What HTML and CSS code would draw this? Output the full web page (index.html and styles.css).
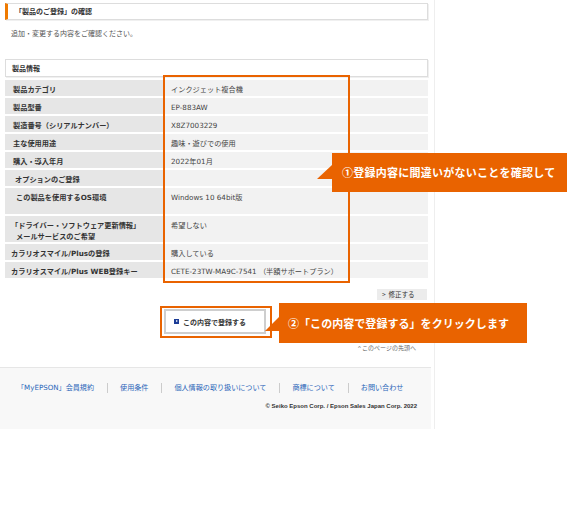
FILE: index.html
```html
<!DOCTYPE html>
<html lang="ja">
<head>
<meta charset="utf-8">
<title>製品のご登録の確認</title>
<link rel="stylesheet" href="styles.css">
</head>
<body>
<div class="page">
  <h1 class="title">「製品のご登録」の確認</h1>
  <p class="lead">追加・変更する内容をご確認ください。</p>
  <h2 class="section">製品情報</h2>
  <div class="tablewrap">
    <table class="info">
      <colgroup><col class="col-label"><col></colgroup>
      <tr><th>製品カテゴリ</th><td>インクジェット複合機</td></tr>
      <tr><th>製品型番</th><td>EP-883AW</td></tr>
      <tr><th>製造番号（シリアルナンバー）</th><td>X8Z7003229</td></tr>
      <tr><th>主な使用用途</th><td>趣味・遊びでの使用</td></tr>
      <tr><th>購入・導入年月</th><td>2022年01月</td></tr>
      <tr><th class="ind1">オプションのご登録</th><td></td></tr>
      <tr class="tall"><th class="ind2">この製品を使用するOS環境</th><td>Windows 10 64bit版</td></tr>
      <tr class="tall"><th class="ind3">「ドライバー・ソフトウェア更新情報」<br>メールサービスのご希望</th><td>希望しない</td></tr>
      <tr><th class="ind0">カラリオスマイル/Plusの登録</th><td>購入している</td></tr>
      <tr><th class="ind0">カラリオスマイル/Plus WEB登録キー</th><td>CETE-23TW-MA9C-7541 （半額サポートプラン）</td></tr>
    </table>
    <div class="hl hl-table"></div>
    <div class="callout c1">①登録内容に間違いがないことを確認して</div>
  </div>
  <div class="edit-row"><a class="edit"><span class="gt">&gt;</span>修正する</a></div>
  <div class="submit-row">
    <a class="submit"><span class="ico"></span>この内容で登録する</a>
    <div class="hl hl-btn"></div>
    <div class="callout c2">②「この内容で登録する」をクリックします</div>
  </div>
  <div class="totop"><span class="caret">^</span> このページの先頭へ</div>
  <footer class="footer">
    <ul class="links">
      <li><a>「MyEPSON」会員規約</a></li>
      <li><a>使用条件</a></li>
      <li><a>個人情報の取り扱いについて</a></li>
      <li><a>商標について</a></li>
      <li><a>お問い合わせ</a></li>
    </ul>
    <p class="copy">© Seiko Epson Corp. / Epson Sales Japan Corp. 2022</p>
  </footer>
</div>
</body>
</html>
```
FILE: styles.css
```css
html, body {
  margin: 0;
  padding: 0;
  background: #fff;
}
body {
  font-family: "DejaVu Sans", "Noto Sans CJK JP", sans-serif;
  font-size: 7px;
  color: #444;
}
.page {
  width: 435px;
  box-sizing: border-box;
  padding-top: 3px;
  padding-right: 4px;
  border-right: 1px solid #eeeeee;
}
.title {
  margin: 0 0 0 5px;
  width: 423px;
  height: 17px;
  box-sizing: border-box;
  border: 1px solid #dddddd;
  border-left: 3px solid #ef7a00;
  box-shadow: 1px 1px 0 #f0f0f0;
  padding-left: 7px;
  font-family: "Noto Sans CJK JP", sans-serif;
  font-size: 7px;
  font-weight: bold;
  line-height: 15px;
  color: #333;
}
.lead {
  margin: 8px 0 0 11px;
  line-height: 10px;
  font-family: "Noto Sans CJK JP", sans-serif;
  color: #555;
}
.section {
  margin: 21px 0 0 5px;
  width: 423px;
  height: 18px;
  box-sizing: border-box;
  border: 1px solid #dddddd;
  box-shadow: 1px 1px 0 #f0f0f0;
  padding-left: 6px;
  font-family: "Noto Sans CJK JP", sans-serif;
  font-size: 7px;
  font-weight: bold;
  line-height: 16px;
  color: #333;
}
.tablewrap {
  position: relative;
  margin: 3px 0 0 5px;
  width: 423px;
}
.info {
  width: 423px;
  border-collapse: separate;
  border-spacing: 0;
  table-layout: fixed;
  font-size: 7.2px;
}
.col-label {
  width: 158px;
}
.info tr {
  height: 18px;
}
.info tr.tall {
  height: 28px;
}
.info th,
.info td {
  vertical-align: top;
  padding: 4px 0 0 8px;
  line-height: 11px;
  border-bottom: 2px solid #fff;
  text-align: left;
  white-space: nowrap;
}
.info th {
  background: #e6e6e6;
  font-weight: bold;
  color: #333;
}
.info td {
  background: #f2f2f2;
  color: #444;
}
.info th.ind0 { padding-left: 6px; }
.info th.ind1 { padding-left: 10px; }
.info th.ind2 { padding-left: 11px; }
.info th.ind3 { padding-left: 11px; text-indent: -5px; }
.hl {
  position: absolute;
  box-sizing: border-box;
  border: 2px solid #e96300;
  pointer-events: none;
}
.hl-table {
  left: 158px;
  top: -5px;
  width: 187px;
  height: 208px;
}
.callout {
  position: absolute;
  box-sizing: border-box;
  background: #e96300;
  color: #fff;
  font-family: "Noto Sans CJK JP", sans-serif;
  font-size: 11px;
  font-weight: bold;
  white-space: nowrap;
}
.callout::before {
  content: "";
  position: absolute;
  background: #e96300;
  clip-path: polygon(100% 0, 0 100%, 100% 100%);
}
.c1 {
  left: 327px;
  top: 73px;
  width: 235px;
  height: 39px;
  line-height: 39px;
  padding-left: 10px;
  letter-spacing: 0.25px;
}
.c1::before {
  left: -15px;
  top: 12px;
  width: 15px;
  height: 14px;
}
.edit-row {
  margin-top: 9px;
  display: flex;
  justify-content: flex-end;
  padding-right: 3px;
}
.edit {
  display: block;
  width: 50px;
  height: 11px;
  box-sizing: border-box;
  background: #ececec;
  padding-left: 5px;
  font-family: "Noto Sans CJK JP", sans-serif;
  font-size: 6.5px;
  line-height: 11px;
  color: #333;
}
.gt {
  margin-right: 3px;
}
.submit-row {
  position: relative;
  margin-top: 6px;
  padding: 3px 0 4px;
  display: flex;
  justify-content: center;
}
.submit {
  display: flex;
  align-items: center;
  gap: 4px;
  width: 102px;
  height: 25px;
  box-sizing: border-box;
  border: 2px solid #cecece;
  background: #fff;
  padding-left: 8px;
  font-family: "Noto Sans CJK JP", sans-serif;
  font-size: 7px;
  font-weight: bold;
  color: #333;
}
.ico {
  position: relative;
  width: 5px;
  height: 5px;
  background: #1c3c96;
  flex: none;
}
.ico::after {
  content: "";
  position: absolute;
  left: 2px;
  top: 1px;
  border-left: 2px solid #fff;
  border-top: 1.5px solid transparent;
  border-bottom: 1.5px solid transparent;
}
.hl-btn {
  left: 160px;
  top: 0;
  width: 112px;
  height: 32px;
}
.c2 {
  left: 279px;
  top: -3px;
  width: 248px;
  height: 40px;
  line-height: 40px;
  padding-left: 9px;
  letter-spacing: 0.05px;
}
.c2::before {
  left: -14px;
  top: 14px;
  width: 14px;
  height: 14px;
}
.totop {
  margin-top: 6px;
  padding-right: 14px;
  text-align: right;
  font-family: "Noto Sans CJK JP", sans-serif;
  font-size: 6px;
  line-height: 8px;
  color: #666;
}
.caret {
  font-family: "Liberation Sans", sans-serif;
}
.footer {
  margin-top: 15px;
  width: 431px;
  height: 62px;
  box-sizing: border-box;
  border-top: 1px solid #e6e6e6;
  background: #f8f8f8;
  padding-top: 15px;
}
.links {
  display: flex;
  margin: 0;
  padding: 0 0 0 17px;
  list-style: none;
  font-size: 7.1px;
  line-height: 10px;
}
.links li {
  padding: 0 13px 0 12px;
}
.links li:first-child {
  padding-left: 0;
}
.links li + li {
  border-left: 1px solid #cccccc;
}
.links a {
  color: #2a66b8;
}
.copy {
  margin: 9px 0 0;
  padding-right: 14px;
  text-align: right;
  font-family: "Liberation Sans", sans-serif;
  font-size: 6px;
  font-weight: bold;
  line-height: 8px;
  color: #333;
}
```
